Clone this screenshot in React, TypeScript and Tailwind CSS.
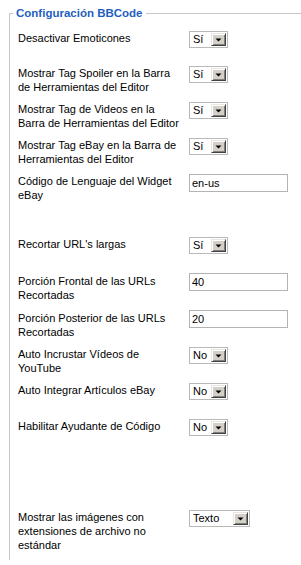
import React from "react";

const font = { fontFamily: '"Liberation Sans", Arial, sans-serif' };

function Select({ value, wide }: { value: string; wide?: boolean }) {
  return (
    <div
      className={`flex h-[17px] items-stretch border border-[#b9b9b9] bg-white ${wide ? "w-[61px]" : "w-[39px]"}`}
    >
      <div className="flex-1 pl-[3px] text-[11px] leading-[15px] text-black">{value}</div>
      <div className="m-[1px] flex w-[15px] items-center justify-center border border-t-[#e8e6e0] border-l-[#e8e6e0] border-b-[#404040] border-r-[#404040] bg-[#d4d0c8] shadow-[inset_1px_1px_0_#ffffff,inset_-1px_-1px_0_#808080]">
        <svg width="7" height="4" viewBox="0 0 7 4">
          <path d="M0.5 0.5 H6.5 L3.5 3.5 Z" fill="#000" />
        </svg>
      </div>
    </div>
  );
}

function TextInput({ value }: { value: string }) {
  return (
    <div className="flex h-[18px] w-[99px] items-center border border-[#b3b3b3] bg-white pl-[2px] text-[11px] text-black">
      {value}
    </div>
  );
}

type Row = { label: React.ReactNode; control: React.ReactNode; h: string; ctrlClass?: string };

export default function App() {
  const rows: Row[] = [
    { label: "Desactivar Emoticones", control: <Select value="Sí" />, h: "h-[35px]" },
    {
      label: (<>Mostrar Tag Spoiler en la Barra<br />de Herramientas del Editor</>),
      control: <Select value="Sí" />,
      h: "h-[36px]",
    },
    {
      label: (<>Mostrar Tag de Videos en la<br />Barra de Herramientas del Editor</>),
      control: <Select value="Sí" />,
      h: "h-[36px]",
    },
    {
      label: (<>Mostrar Tag eBay en la Barra de<br />Herramientas del Editor</>),
      control: <Select value="Sí" />,
      h: "h-[36px]",
    },
    {
      label: (<>Código de Lenguaje del Widget<br />eBay</>),
      control: <TextInput value="en-us" />,
      h: "h-[63px]",
    },
    { label: "Recortar URL's largas", control: <Select value="Sí" />, h: "h-[37px]" },
    {
      label: (<>Porción Frontal de las URLs<br />Recortadas</>),
      control: <TextInput value="40" />,
      h: "h-[37px]",
      ctrlClass: "-mt-[1px]",
    },
    {
      label: (<>Porción Posterior de las URLs<br />Recortadas</>),
      control: <TextInput value="20" />,
      h: "h-[36px]",
      ctrlClass: "-mt-[1px]",
    },
    {
      label: (<>Auto Incrustar Vídeos de<br />YouTube</>),
      control: <Select value="No" />,
      h: "h-[36px]",
    },
    { label: "Auto Integrar Artículos eBay", control: <Select value="No" />, h: "h-[36px]" },
    { label: "Habilitar Ayudante de Código", control: <Select value="No" />, h: "h-[91px]" },
    {
      label: (<>Mostrar las imágenes con<br />extensiones de archivo no<br />estándar</>),
      control: <Select value="Texto" wide />,
      h: "h-[50px]",
    },
  ];

  return (
    <div className="h-[565px] w-[301px] overflow-hidden bg-white" style={font}>
      <fieldset className="ml-[9px] mt-[5px] border-t border-l border-r-0 border-b-0 border-[#c6c6c6] p-0">
        <legend className="ml-[3px] px-[3px] text-[11.5px] font-bold leading-[16px] text-[#1f5fbf]">
          Configuración BBCode
        </legend>
        <div className="flex flex-col pl-[8px] pt-[10px]">
          {rows.map((r, i) => (
            <div key={i} className={`flex items-start ${r.h}`}>
              <div className="w-[171px] text-[11px] leading-[14px] text-black">{r.label}</div>
              <div className={r.ctrlClass ?? ""}>{r.control}</div>
            </div>
          ))}
        </div>
      </fieldset>
    </div>
  );
}
